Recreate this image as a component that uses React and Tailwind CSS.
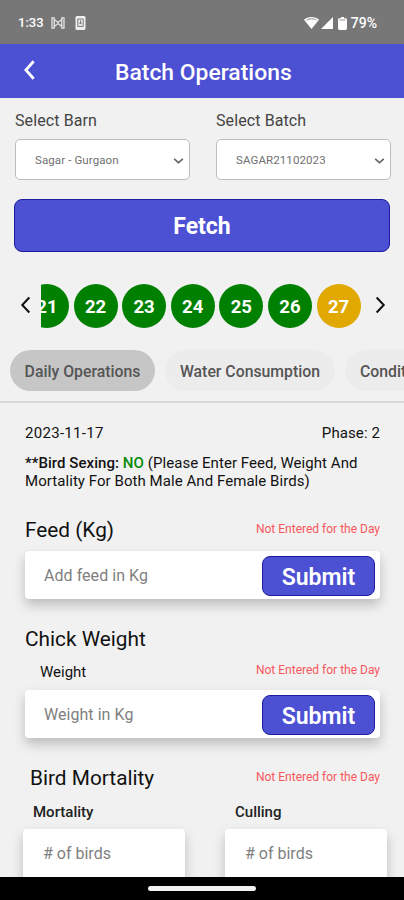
import React, { useState } from 'react';

const days = [21, 22, 23, 24, 25, 26, 27];

const Chevron = ({ d, className, width = 2 }) => (
  <svg viewBox="0 0 24 24" className={className} fill="none" stroke="currentColor" strokeWidth={width}>
    <path d={d} />
  </svg>
);

const StatusBar = () => (
  <div className="h-[44px] shrink-0 bg-[#777777] text-white flex items-center justify-between pl-[18px] pr-[27px] pt-[2px]">
    <div className="flex items-center">
      <span className="text-[13px] font-medium w-[33px]">1:33</span>
      <svg viewBox="0 0 14 12" className="w-[14px] h-[12px]" fill="none" stroke="#e4e4e4" strokeWidth="1.3">
        <path d="M1 .8v10.400h2.200V.8zM13 .8v10.400h-2.200V.8zM3.200 2.500 7 5.500l3.800-3M3.200 9.500 7 6.500l3.800 3" />
      </svg>
      <svg viewBox="0 0 11 14" className="w-[11px] h-[14px] ml-[10px]">
        <rect x="0.5" y="0" width="10" height="14" rx="1.6" fill="#efefef" />
        <path d="M2.8 3h5.4v7.4H2.8zM5.5 4.4v3.4M4 6.6l1.5 1.5L7 6.6" fill="none" stroke="#777" strokeWidth="1" />
      </svg>
    </div>
    <div className="flex items-center">
      <svg viewBox="0 0 15 12" className="w-[15px] h-[12px]">
        <path d="M7.5 12 0 2.8C2 1 4.600 0 7.500 0S13 1 15 2.800z" fill="#fff" />
        <path d="M2.400 3.300C5 1.300 10 1.300 12.600 3.300" fill="none" stroke="#888" strokeWidth="1" />
      </svg>
      <svg viewBox="0 0 12 12" className="w-[12px] h-[12px] ml-[2px]">
        <path d="M12 0v12H0z" fill="#fff" />
      </svg>
      <svg viewBox="0 0 9 13" className="w-[9px] h-[13px] ml-[5px]">
        <path d="M3 0h3v1.300h1.600C8.400 1.300 9 1.900 9 2.700v8.900c0 .8-.6 1.400-1.400 1.400H1.400C.6 13 0 12.400 0 11.600V2.700c0-.8.6-1.400 1.400-1.400H3z" fill="#fff" />
        <path d="M1.500 3h6" stroke="#999" strokeWidth="1" />
      </svg>
      <span className="text-[14px] font-medium ml-[4px]">79%</span>
    </div>
  </div>
);

const SelectField = ({ label, value }) => (
  <div className="w-[175px]">
    <div className="h-[41px] pt-[13px] text-[16px] leading-[20px] tracking-[0.100px] text-[#444] whitespace-nowrap">{label}</div>
    <div className="h-[41px] rounded-[5px] border border-[#bdbdbd] bg-white flex items-center justify-between pl-[19px] pr-[4px]">
      <span className="text-[11.500px] tracking-[0.100px] text-[#707070] pt-[3px]">{value}</span>
      <Chevron d="M4 9l8 7 8-7" width={3} className="w-[13px] h-[13px] mt-px text-[#666]" />
    </div>
  </div>
);

const SubmitButton = () => (
  <button className="w-[113px] h-[40px] rounded-[8px] border-[1.500px] border-[#1c1ca0] bg-[#4c50d3] text-white text-[23px] leading-[36px] font-semibold pt-[3px]">
    Submit
  </button>
);

const NotEntered = () => (
  <span className="text-[12px] leading-[16px] text-[#f8585c]">Not Entered for the Day</span>
);

const InputCard = ({ placeholder }) => (
  <div className="h-[48px] rounded-[4px] bg-white shadow-[0_6px_12px_rgba(0,0,0,0.22)] flex items-center justify-between pl-[19px] pr-[5px] pt-[2px]">
    <span className="text-[16px] tracking-[0.050px] text-[#808080]">{placeholder}</span>
    <SubmitButton />
  </div>
);

const BirdCount = ({ label }) => (
  <div className="w-[162px]">
    <div className="h-[27px] pl-[10px] text-[15px] leading-[20px] font-medium text-[#222]">{label}</div>
    <div className="h-[52px] rounded-[4px] bg-white shadow-[0_6px_12px_rgba(0,0,0,0.22)] pl-[20px] pt-[15px] text-[16px] leading-[20px] text-[#808080]">
      # of birds
    </div>
  </div>
);

function App() {
  const [activeDay, setActiveDay] = useState(27);

  return (
    <div className="w-[404px] h-[900px] overflow-hidden bg-[#f1f1f1] flex flex-col font-['Roboto',sans-serif]">
      <StatusBar />

      <header className="h-[54px] shrink-0 bg-[#4c50d3] text-white flex items-center pl-[19px]">
        <Chevron d="M16 2.500 7.500 12l8.500 9.500" width={3} className="w-[22px] h-[22px] -mt-[3px]" />
        <h1 className="ml-[74px] text-[22.900px] font-medium pt-[5px] whitespace-nowrap">Batch Operations</h1>
      </header>

      <main className="flex-1 min-h-0 overflow-hidden">
        <div className="flex gap-[26px] pl-[15px]">
          <SelectField label="Select Barn" value="Sagar - Gurgaon" />
          <SelectField label="Select Batch" value="SAGAR21102023" />
        </div>

        <button className="mt-[19px] ml-[14px] w-[376px] h-[53px] rounded-[8px] border-[1.500px] border-[#1c1ca0] bg-[#4c50d3] text-white text-[23px] font-bold block pt-[4px]">
          Fetch
        </button>

        {/* Day picker */}
        <div className="mt-[31px] h-[45px] flex items-center">
          <Chevron d="M16 3 7.500 12l8.500 9" width={2.400} className="w-[20px] h-[20px] -mt-[2px] ml-[16px] mr-[5px] text-[#111]" />
          <div className="w-[319.500px] flex justify-end gap-[4.600px] overflow-hidden">
            {days.map((day) => (
              <button
                key={day}
                onClick={() => setActiveDay(day)}
                className={`size-[44px] shrink-0 rounded-full text-white text-[18.500px] leading-[24px] pt-[2px] font-bold ${day === activeDay ? 'bg-[#e0a800]' : 'bg-[#008000]'}`}
              >
                {day}
              </button>
            ))}
          </div>
          <Chevron d="M8 3l8.500 9L8 21" width={2.400} className="w-[20px] h-[20px] -mt-[2px] ml-[9px] text-[#111]" />
        </div>

        {/* Tabs */}
        <div className="mt-[22px] pl-[10px] flex gap-[10px] text-[15.800px] font-medium text-[#555] whitespace-nowrap overflow-hidden">
          <div className="w-[145px] h-[41px] shrink-0 rounded-full bg-[#c6c6c6] flex items-center justify-center pt-[2px]">Daily Operations</div>
          <div className="w-[170px] h-[41px] shrink-0 rounded-full bg-[#ececec] flex items-center justify-center pt-[2px]">Water Consumption</div>
          <div className="w-[120px] h-[41px] shrink-0 rounded-full bg-[#ececec] flex items-center pl-[15px] pt-[2px]">Condition</div>
        </div>
        <div className="mt-[10px] h-[2px] bg-[#d9d9d9]"></div>

        <section className="pl-[25px] pr-[24px] text-[#111]">
          <div className="pt-[20px] h-[51px] flex justify-between text-[15px] leading-[20px]">
            <span className="tracking-[0.300px]">2023-11-17</span>
            <span className="tracking-[0.100px]">Phase: 2</span>
          </div>
          <p className="h-[60px] text-[15px] leading-[18px] tracking-[0.060px] whitespace-nowrap">
            <span className="font-medium">**Bird Sexing: <span className="text-[#078a07]">NO</span></span> (Please Enter Feed, Weight And
            <br />
            Mortality For Both Male And Female Birds)
          </p>

          <div className="h-[37px] pt-[4px] flex justify-between">
            <h2 className="text-[20.800px] leading-[24px]">Feed (Kg)</h2>
            <div className="-mt-[2px]"><NotEntered /></div>
          </div>
          <InputCard placeholder="Add feed in Kg" />

          <h2 className="mt-[28px] text-[20.800px] leading-[24px]">Chick Weight</h2>
          <div className="h-[39px] pt-[11px] pl-[15px] flex justify-between">
            <span className="text-[15px] leading-[20px]">Weight</span>
            <NotEntered />
          </div>
          <InputCard placeholder="Weight in Kg" />

          <div className="mt-[28px] pl-[5px] flex justify-between">
            <h2 className="text-[20.800px] leading-[24px]">Bird Mortality</h2>
            <div className="-mt-[2px]"><NotEntered /></div>
          </div>
        </section>
        <div className="mt-[11.500px] pl-[23px] flex gap-[40px]">
          <BirdCount label="Mortality" />
          <BirdCount label="Culling" />
        </div>
      </main>

      <div className="h-[23px] shrink-0 bg-black flex justify-center pt-[9px]">
        <div className="w-[108px] h-[5px] rounded-full bg-[#f2f2f2]"></div>
      </div>
    </div>
  );
}

export default App;
